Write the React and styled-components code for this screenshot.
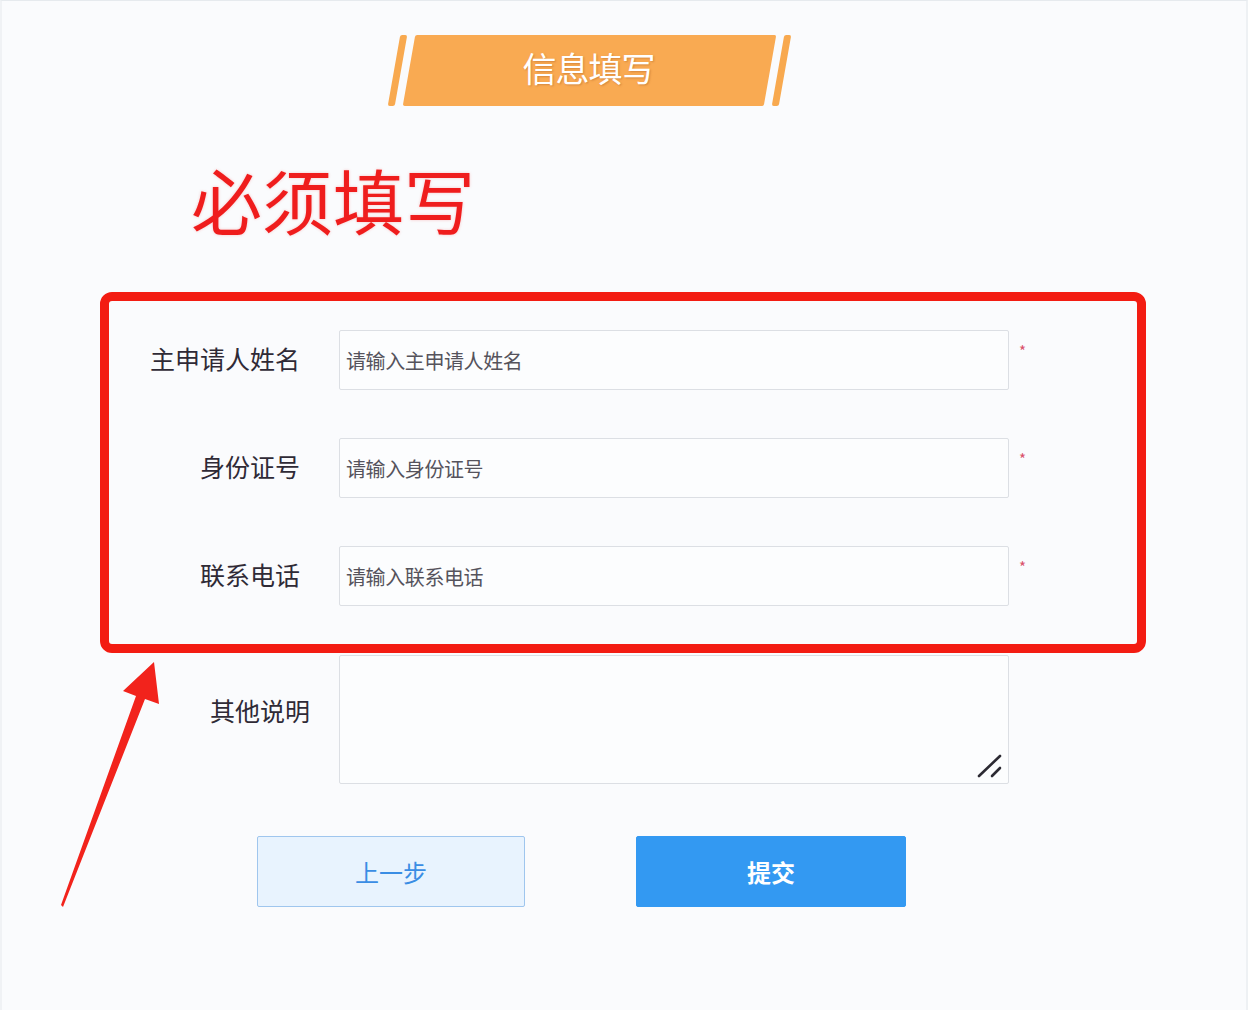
import React from "react";
import styled, { createGlobalStyle } from "styled-components";

const GlobalStyle = createGlobalStyle`
  html, body {
    margin: 0;
    padding: 0;
    background: #fafbfd;
  }
  body {
    font-family: "Noto Sans CJK SC", "Noto Sans", sans-serif;
  }
  * {
    box-sizing: border-box;
  }
`;

const fields = [
  { label: "主申请人姓名", placeholder: "请输入主申请人姓名" },
  { label: "身份证号", placeholder: "请输入身份证号" },
  { label: "联系电话", placeholder: "请输入联系电话" },
];

function App() {
  return (
    <>
      <GlobalStyle />
      <Page>
        <Banner>
          <Stripe />
          <Plate>
            <PlateText>信息填写</PlateText>
          </Plate>
          <Stripe />
        </Banner>

        <Notice>必须填写</Notice>

        <RequiredBox>
          {fields.map((f) => (
            <Row key={f.label}>
              <Label $gap={39}>{f.label}</Label>
              <Input placeholder={f.placeholder} />
              <Required>*</Required>
            </Row>
          ))}
        </RequiredBox>

        <Row $outside>
          <Label $gap={29} $top={42}>
            其他说明
          </Label>
          <AreaWrap>
            <TextArea />
            <Grip width="26" height="26" viewBox="0 0 26 26">
              <line x1="3" y1="23" x2="24" y2="3" />
              <line x1="16" y1="23" x2="24" y2="15" />
            </Grip>
          </AreaWrap>
        </Row>

        <Buttons>
          <Button>上一步</Button>
          <Button $primary>提交</Button>
        </Buttons>

        <Arrow width="200" height="300" viewBox="0 0 200 300">
          <polygon points="154,11 159,53 145,48 63,256 61,254 136,45 123,40" />
        </Arrow>
      </Page>
    </>
  );
}

const Page = styled.div`
  position: relative;
  width: 1248px;
  height: 1010px;
  padding-top: 34px;
  border-top: 1px solid #e6eaee;
  border-left: 2px solid #f0f2f5;
  border-right: 2px solid #eef1f4;
  overflow: hidden;
`;

const Banner = styled.div`
  display: flex;
  align-items: stretch;
  height: 71px;
  padding-left: 384px;
`;

const Stripe = styled.div`
  width: 7px;
  margin: 0 8px;
  background: #f8a94f;
  border-radius: 2px;
  transform: skewX(-10deg);
`;

const Plate = styled.div`
  width: 361px;
  display: flex;
  align-items: center;
  justify-content: center;
  background: #f9aa52;
  border-radius: 2px;
  transform: skewX(-10deg);
`;

const PlateText = styled.span`
  transform: skewX(10deg);
  margin: -6px 0 0 -4px;
  color: #ffffff;
  font-size: 34px;
  letter-spacing: -1px;
  text-shadow: 1px 1px 2px rgba(150, 70, 20, 0.35);
`;

const Notice = styled.h1`
  margin: 54px 0 0 189px;
  height: 80px;
  line-height: 76px;
  font-size: 71px;
  font-weight: 400;
  color: #ef1d1d;
  text-shadow: 0 0 3px rgba(239, 29, 29, 0.25);
`;

const RequiredBox = styled.div`
  margin: 52px 0 0 98px;
  width: 1046px;
  padding: 29px 0 38px;
  display: flex;
  flex-direction: column;
  gap: 48px;
  border: 9px solid #f31c12;
  border-radius: 12px;
`;

const Row = styled.div`
  display: flex;
  align-items: ${(p) => (p.$outside ? "flex-start" : "center")};
  margin: ${(p) => (p.$outside ? "2px 0 0 107px" : "0")};
`;

const Label = styled.label`
  flex: 0 0 230px;
  align-self: ${(p) => (p.$top ? "flex-start" : "center")};
  padding-top: ${(p) => p.$top || 0}px;
  padding-right: ${(p) => p.$gap}px;
  margin-top: -4px;
  text-align: right;
  font-size: 25px;
  line-height: 34px;
  color: #2f2a36;
`;

const Input = styled.input`
  width: 670px;
  height: 60px;
  padding: 0 6px;
  border: 1px solid #dcdfe4;
  border-radius: 2px;
  background: #fcfdfe;
  font-family: inherit;
  font-size: 20px;
  letter-spacing: -0.4px;
  outline: none;
  &::placeholder {
    color: #55535c;
  }
`;

const Required = styled.span`
  align-self: flex-start;
  margin: 10px 0 0 10px;
  font-size: 15px;
  color: #d9506a;
`;

const AreaWrap = styled.div`
  position: relative;
  width: 670px;
  height: 129px;
`;

const TextArea = styled.textarea`
  display: block;
  width: 100%;
  height: 100%;
  border: 1px solid #dcdfe4;
  border-radius: 2px;
  background: #fcfdfe;
  resize: none;
  outline: none;
  font-family: inherit;
  font-size: 20px;
`;

const Grip = styled.svg`
  position: absolute;
  right: 7px;
  bottom: 5px;
  stroke: #2c2a33;
  stroke-width: 2.6;
  stroke-linecap: round;
`;

const Buttons = styled.div`
  display: flex;
  gap: 111px;
  margin: 52px 0 0 255px;
`;

const Button = styled.button`
  width: ${(p) => (p.$primary ? 270 : 268)}px;
  height: 71px;
  border: 1px solid ${(p) => (p.$primary ? "#3399f2" : "#9fc6ee")};
  border-radius: 2px;
  background: ${(p) => (p.$primary ? "#3399f2" : "#e8f3fe")};
  color: ${(p) => (p.$primary ? "#ffffff" : "#3a8de4")};
  font-family: inherit;
  font-size: 24px;
  font-weight: ${(p) => (p.$primary ? 700 : 400)};
  cursor: pointer;
`;

const Arrow = styled.svg`
  position: absolute;
  left: -2px;
  top: 650px;
  fill: #f2231c;
`;

export default App;
